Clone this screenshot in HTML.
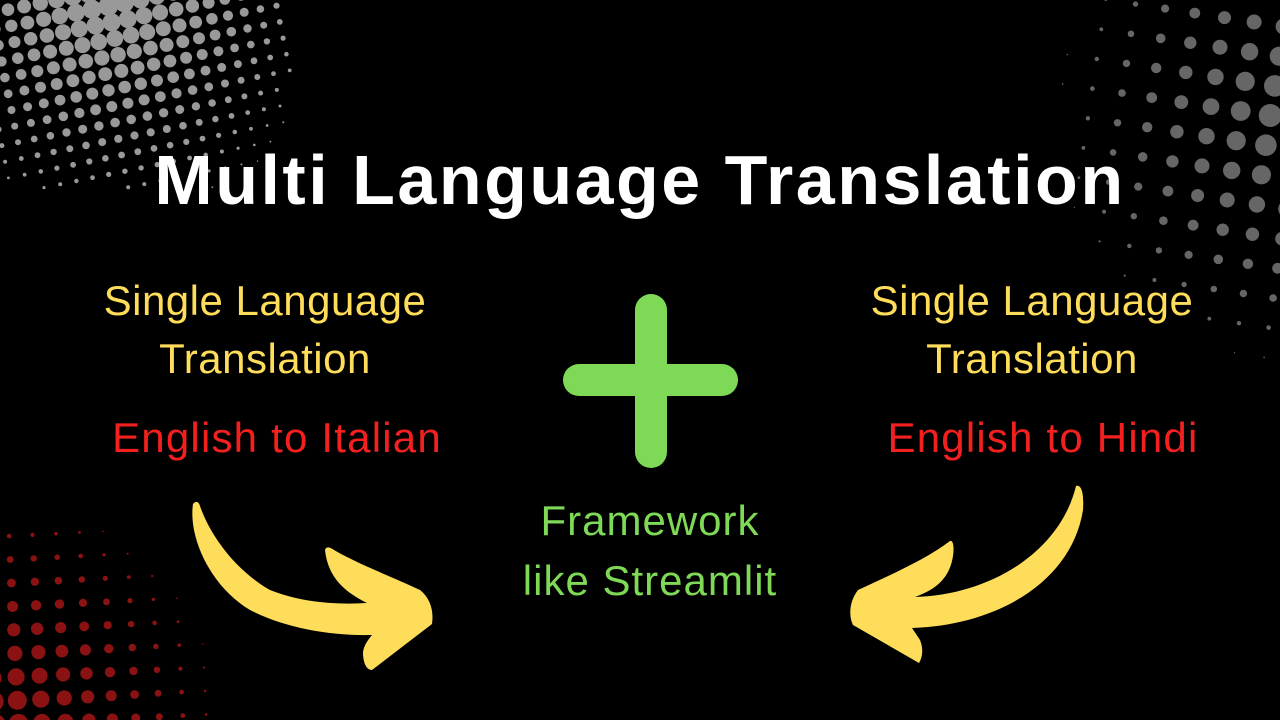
<!DOCTYPE html>
<html><head><meta charset="utf-8"><style>
html,body{margin:0;padding:0;background:#000;}
body{width:1280px;height:720px;position:relative;overflow:hidden;font-family:"Liberation Sans",sans-serif;}
svg{position:absolute;left:0;top:0;}
.t{position:absolute;left:0;width:1280px;text-align:center;white-space:nowrap;}
</style></head><body>
<svg id="dots" width="1280" height="720"></svg>
<svg width="1280" height="720">
<rect x="635" y="294" width="32" height="174" rx="16" fill="#7ed957"/>
<rect x="563" y="364" width="175" height="32" rx="16" fill="#7ed957"/>
<path fill="#fedd5a" d="M193,504 C196,500 199,502 200,506 C210,535 235,570 270,590 C300,602 335,605 367,603 C345,592 328,578 325,550 C326,546 330,547 334,550 C360,565 395,578 420,590 C430,598 434,610 432,624 L372,670 C366,670 363,662 363,652 C364,645 368,640 372,635 C330,636 285,628 250,610 C220,592 200,560 194,530 C192,520 192,510 193,504 Z"/>
<path fill="#fedd5a" d="M1076,486 C1082,484 1084,495 1083,510 C1072,580 1000,625 912,628 L920,640 C924,650 922,658 919,663 L853,625 C848,615 850,600 858,590 C890,575 925,560 950,541 C954,540 954,550 953,556 C950,575 940,588 915,597 C990,595 1060,552 1076,486 Z"/>
</svg>
<div class="t" style="top:140px;font-size:70px;letter-spacing:2.5px;font-weight:bold;color:#fff;">Multi Language Translation</div>
<div class="t" style="left:-375px;top:272px;font-size:42px;letter-spacing:0.5px;color:#fedd5a;line-height:58px;">Single Language<br>Translation</div>
<div class="t" style="left:392px;top:272px;font-size:42px;letter-spacing:0.5px;color:#fedd5a;line-height:58px;">Single Language<br>Translation</div>
<div class="t" style="left:-363px;top:414px;font-size:42px;letter-spacing:1.2px;color:#f42020;">English to Italian</div>
<div class="t" style="left:403px;top:414px;font-size:42px;letter-spacing:1.2px;color:#f42020;">English to Hindi</div>
<div class="t" style="left:10px;top:491px;font-size:42px;letter-spacing:1px;color:#7ed957;line-height:60px;">Framework<br>like Streamlit</div>
<script>
var s=document.getElementById('dots'),h='';
function field(cx,cy,sp,ang,maxr,fall,col,x0,y0,x1,y1){
 var c=Math.cos(ang),sn=Math.sin(ang);
 for(var i=-40;i<=40;i++)for(var j=-40;j<=40;j++){
  var x=cx+(i*c-j*sn)*sp,y=cy+(i*sn+j*c)*sp;
  if(x<x0||x>x1||y<y0||y>y1)continue;
  var d=Math.hypot(x-cx,y-cy),r=maxr*(1-d/fall);
  if(r<0.6)continue;
  h+='<circle cx="'+x.toFixed(1)+'" cy="'+y.toFixed(1)+'" r="'+r.toFixed(1)+'" fill="'+col+'"/>';
 }
}
field(105,-10,16.5,-0.2,10.5,245,'#999',-20,-20,290,190);
field(1300,120,30,0.15,13,255,'#666',1060,-20,1300,380);
field(-5,725,23.5,-0.05,11,240,'#8b1212',-20,530,220,740);
s.innerHTML=h;
</script>
</body></html>
